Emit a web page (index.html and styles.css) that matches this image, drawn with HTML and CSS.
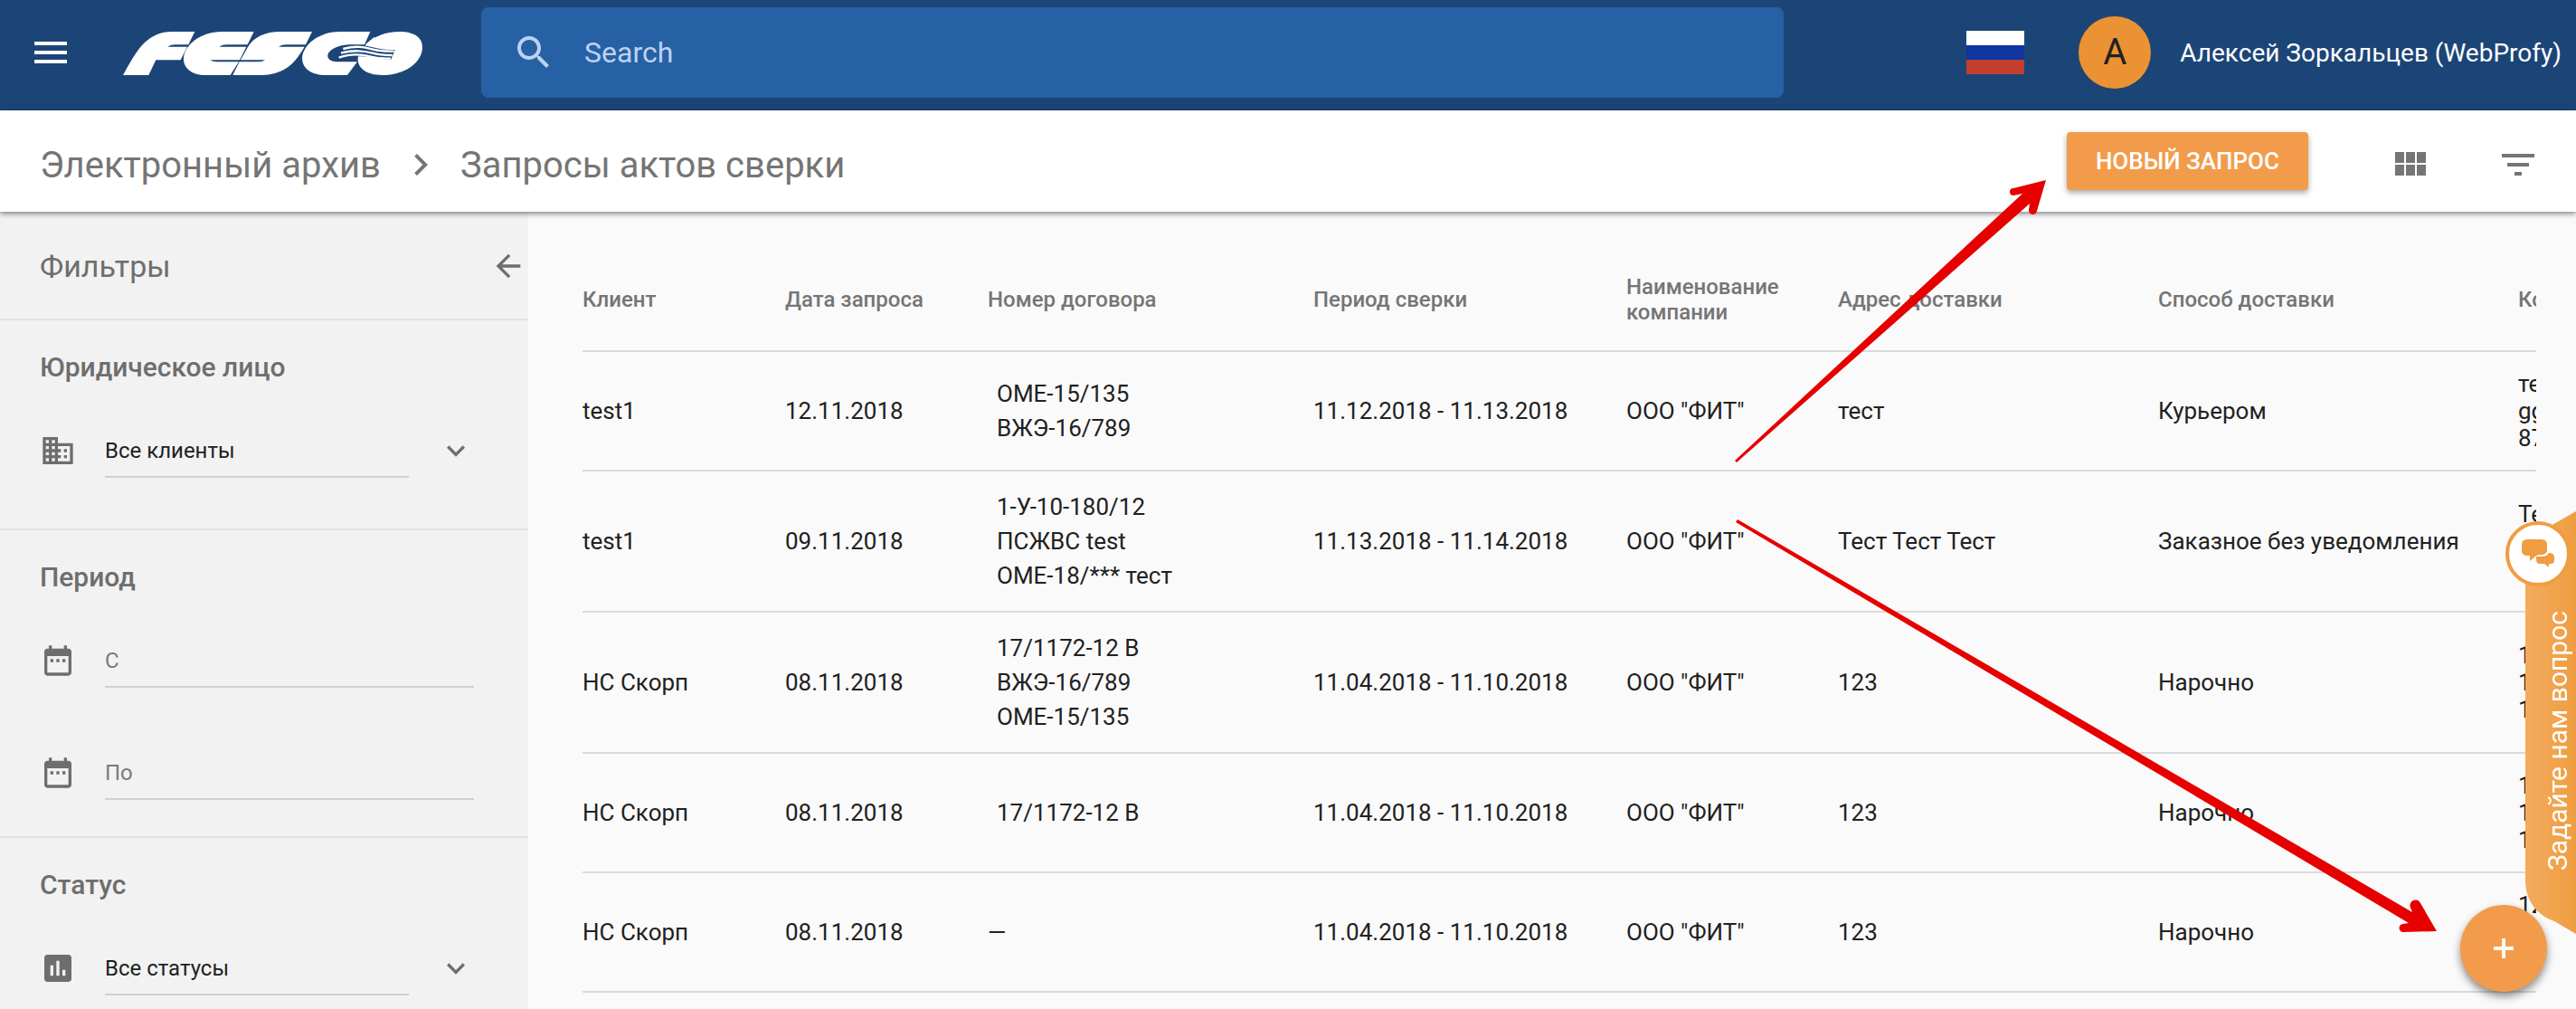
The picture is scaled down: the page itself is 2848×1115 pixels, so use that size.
FILE: index.html
```html
<!DOCTYPE html>
<html lang="ru">
<head>
<meta charset="utf-8">
<title>Запросы актов сверки</title>
<meta name="viewport" content="width=device-width, initial-scale=1">
<link rel="stylesheet" href="styles.css">
</head>
<body>
<header class="topbar">
  <button class="menu-button" type="button" aria-label="Меню">
    <svg class="icon-lg" viewBox="0 0 24 24"><path d="M3 18h18v-2H3v2zm0-5h18v-2H3v2zm0-7v2h18V6H3z"/></svg>
  </button>
  <a class="logo" href="#" aria-label="FESCO">
    <svg viewBox="0 0 1035 195" width="345" height="65">
      <g fill="#fff">
        <path d="M18 171C40 133 58 96 86 67C112 40 145 27 180 27H256L235 70H190Q176 70 166 77H231L209 121H127L103 171Z"/>
        <path d="M452 27L431 70H362Q347 70 337 77H427L405 121H307Q314 127 329 127H402L374 171H290C248 171 218 148 219 116C221 72 275 27 345 27Z"/>
        <path d="M645 27L624 70H560Q544 70 534 77H620C600 110 584 132 560 148C538 163 508 171 480 171H382L404 127H468Q482 127 489 121H408L432 78C452 44 490 27 540 27Z"/>
        <path d="M838 27L819 70H775C732 70 697 88 697 108C698 121 711 127 735 127H795L762 171H690C642 171 612 148 612 114C616 68 670 27 738 27Z"/>
        <path d="M824 71C850 42 890 27 935 27C980 27 1012 44 1011 80C1009 128 955 171 877 171C825 171 797 148 797 118C797 100 806 86 824 71Z"/>
      </g>
      <path fill="#1c4577" d="M750 76C790 66 825 73 860 82C880 87 900 87 920 87L907 119C870 120 840 108 803 109C778 110 755 113 731 122Z"/>
      <g fill="none" stroke="#fff" stroke-width="7">
        <path d="M748 84C790 73 815 77 848 86C872 93 893 92 917 92"/>
        <path d="M741 98C785 88 810 89 845 98C869 105 890 105 911 105"/>
        <path d="M734 113C778 99 806 102 840 110C865 117 885 116 906 116"/>
      </g>
      <path fill="#fff" d="M822 69L850 46L920 60L930 86C885 88 865 76 824 71Z"/>
    </svg>
  </a>
  <label class="search">
    <svg class="icon-lg" viewBox="0 0 24 24"><path d="M15.5 14h-.79l-.28-.27C15.41 12.59 16 11.11 16 9.5 16 5.91 13.09 3 9.5 3S3 5.91 3 9.5 5.91 16 9.5 16c1.61 0 3.09-.59 4.23-1.57l.27.28v.79l5 4.99L20.49 19l-4.99-5zm-6 0C7.01 14 5 11.99 5 9.5S7.01 5 9.5 5 14 7.01 14 9.5 11.99 14 9.5 14z"/></svg>
    <input type="search" placeholder="Search" aria-label="Search">
  </label>
  <div class="account">
    <button class="flag" type="button" aria-label="Русский"></button>
    <span class="avatar">А</span>
    <span class="user-name">Алексей Зоркальцев (WebProfy)</span>
  </div>
</header>

<div class="subheader">
  <nav class="crumbs">
    <a href="#">Электронный архив</a>
    <svg class="icon-lg" viewBox="0 0 24 24"><path d="M10 6L8.59 7.41 13.17 12l-4.58 4.59L10 18l6-6z"/></svg>
    <h1>Запросы актов сверки</h1>
  </nav>
  <div class="actions">
    <button class="new-request" type="button">НОВЫЙ ЗАПРОС</button>
    <button class="icon-button" type="button" aria-label="Вид"><svg class="icon-lg" viewBox="0 0 24 24"><path d="M4 11h5V5H4v6zm0 7h5v-6H4v6zm6 0h5v-6h-5v6zm6 0h5v-6h-5v6zm-6-7h5V5h-5v6zm6-6v6h5V5h-5z"/></svg></button>
    <button class="icon-button" type="button" aria-label="Фильтр"><svg class="icon-lg" viewBox="0 0 24 24"><path d="M10 18h4v-2h-4v2zM3 6v2h18V6H3zm3 7h12v-2H6v2z"/></svg></button>
  </div>
</div>

<div class="layout">
  <aside class="filters">
    <div class="filters-head">
      <h2>Фильтры</h2>
      <button type="button" aria-label="Скрыть фильтры"><svg class="icon" viewBox="0 0 24 24"><path d="M20 11H7.83l5.59-5.59L12 4l-8 8 8 8 1.41-1.41L7.83 13H20v-2z"/></svg></button>
    </div>
    <section class="filter-group filter-group-tall">
      <h3>Юридическое лицо</h3>
      <div class="field">
        <svg class="icon" viewBox="0 0 24 24"><path d="M12 7V3H2v18h20V7H12zM6 19H4v-2h2v2zm0-4H4v-2h2v2zm0-4H4V9h2v2zm0-4H4V5h2v2zm4 12H8v-2h2v2zm0-4H8v-2h2v2zm0-4H8V9h2v2zm0-4H8V5h2v2zm10 12h-8v-2h2v-2h-2v-2h2v-2h-2V9h8v10zm-2-8h-2v2h2v-2zm0 4h-2v2h2v-2z"/></svg>
        <select aria-label="Юридическое лицо"><option>Все клиенты</option></select>
        <svg class="icon" viewBox="0 0 24 24"><path d="M16.59 8.59L12 13.17 7.41 8.59 6 10l6 6 6-6z"/></svg>
      </div>
    </section>
    <section class="filter-group">
      <h3>Период</h3>
      <div class="field">
        <svg class="icon" viewBox="0 0 24 24"><path d="M9 11H7v2h2v-2zm4 0h-2v2h2v-2zm4 0h-2v2h2v-2zm2-7h-1V2h-2v2H8V2H6v2H5c-1.110 0-1.990.9-1.990 2L3 20c0 1.100.89 2 2 2h14c1.100 0 2-.9 2-2V6c0-1.100-.9-2-2-2zm0 16H5V9h14v11z"/></svg>
        <input type="text" placeholder="С" aria-label="Период с">
      </div>
      <div class="field">
        <svg class="icon" viewBox="0 0 24 24"><path d="M9 11H7v2h2v-2zm4 0h-2v2h2v-2zm4 0h-2v2h2v-2zm2-7h-1V2h-2v2H8V2H6v2H5c-1.110 0-1.990.9-1.990 2L3 20c0 1.100.89 2 2 2h14c1.100 0 2-.9 2-2V6c0-1.100-.9-2-2-2zm0 16H5V9h14v11z"/></svg>
        <input type="text" placeholder="По" aria-label="Период по">
      </div>
    </section>
    <section class="filter-group filter-group-last">
      <h3>Статус</h3>
      <div class="field">
        <svg class="icon" viewBox="0 0 24 24"><path d="M19 3H5c-1.100 0-2 .9-2 2v14c0 1.100.9 2 2 2h14c1.100 0 2-.9 2-2V5c0-1.100-.9-2-2-2zM9 17H7v-7h2v7zm4 0h-2V7h2v10zm4 0h-2v-4h2v4z"/></svg>
        <select aria-label="Статус"><option>Все статусы</option></select>
        <svg class="icon" viewBox="0 0 24 24"><path d="M16.59 8.59L12 13.17 7.41 8.59 6 10l6 6 6-6z"/></svg>
      </div>
    </section>
  </aside>

  <main class="content">
    <div class="table-wrap">
      <table class="requests">
        <colgroup><col class="w-client"><col class="w-date"><col class="w-contract"><col class="w-period"><col class="w-company"><col class="w-address"><col class="w-method"><col class="w-contact"></colgroup>
        <thead>
          <tr><th>Клиент</th><th>Дата запроса</th><th>Номер договора</th><th>Период сверки</th><th>Наименование компании</th><th>Адрес доставки</th><th>Способ доставки</th><th>Контакты</th></tr>
        </thead>
        <tbody>
          <tr><td>test1</td><td>12.11.2018</td><td><ul><li>ОМЕ-15/135</li><li>ВЖЭ-16/789</li></ul></td><td>11.12.2018 - 11.13.2018</td><td>ООО "ФИТ"</td><td>тест</td><td>Курьером</td><td>тест<br>ggg<br>877</td></tr>
          <tr><td>test1</td><td>09.11.2018</td><td><ul><li>1-У-10-180/12</li><li>ПСЖВС test</li><li>ОМЕ-18/*** тест</li></ul></td><td>11.13.2018 - 11.14.2018</td><td>ООО "ФИТ"</td><td>Тест Тест Тест</td><td>Заказное без уведомления</td><td>Тест<br>123<br>123</td></tr>
          <tr><td>НС Скорп</td><td>08.11.2018</td><td><ul><li>17/1172-12 В</li><li>ВЖЭ-16/789</li><li>ОМЕ-15/135</li></ul></td><td>11.04.2018 - 11.10.2018</td><td>ООО "ФИТ"</td><td>123</td><td>Нарочно</td><td>123<br>123<br>123</td></tr>
          <tr><td>НС Скорп</td><td>08.11.2018</td><td><ul><li>17/1172-12 В</li></ul></td><td>11.04.2018 - 11.10.2018</td><td>ООО "ФИТ"</td><td>123</td><td>Нарочно</td><td>123<br>123<br>123</td></tr>
          <tr><td>НС Скорп</td><td>08.11.2018</td><td>—</td><td>11.04.2018 - 11.10.2018</td><td>ООО "ФИТ"</td><td>123</td><td>Нарочно</td><td>123<br>123<br>123</td></tr>
        </tbody>
      </table>
    </div>
  </main>
</div>

<button class="ask" type="button">
  <span class="ask-body"><span class="ask-text">Задайте нам вопрос</span></span>
  <span class="ask-badge">
    <svg viewBox="0 0 36 32" width="36" height="32"><path d="M6 0H22Q28 0 28 6V12Q28 16 23 17H19Q15 18 14 20L9 24V18H6Q0 18 0 12V6Q0 0 6 0Z"/><path d="M30 15Q36 15 36 20V23Q36 27 32 27H30V31L25 27H20Q16 27 16 22V19H22Q28 19 30 15Z"/></svg>
  </span>
</button>

<button class="fab" type="button" aria-label="Добавить">
  <svg viewBox="0 0 24 24" width="24" height="24"><path d="M12 1v22M1 12h22"/></svg>
</button>

<svg class="pointers" viewBox="0 0 930 1115" width="930" height="1115" aria-hidden="true">
  <path d="M0 509L318 214L308 216A4 4 0 0 1 308 208L344 199L334 233A4 4 0 0 1 325 232L326 225L2 511Z"/>
  <path d="M3 574L749 1008L747 1003A4 4 0 0 1 758 998L776 1029L739 1030A4 4 0 0 1 739 1021L745 1020L1 577Z"/>
</svg>
</body>
</html>
```
FILE: styles.css
```css
* { box-sizing: border-box; }

body {
  margin: 0;
  min-height: 100vh;
  display: flex;
  flex-direction: column;
  background: #fafafa;
  color: #212121;
  font-family: Roboto, "Noto Sans", sans-serif;
  font-size: 26px;
  overflow-x: hidden;
}

button, input, select { font: inherit; color: inherit; border: 0; padding: 0; background: none; border-radius: 0; outline: 0; }
h1, h2, h3, ul { margin: 0; padding: 0; font-weight: 400; }
ul { list-style: none; }
svg { display: block; flex: none; fill: currentColor; }

.icon { width: 40px; height: 40px; }
.icon-lg { width: 48px; height: 48px; }

/* Top bar */
.topbar {
  display: flex;
  align-items: center;
  height: 122px;
  padding: 0 16px 6px 32px;
  background: #1c4577;
  color: #fff;
}
.logo { margin: 0 57px 0 50px; }
.search {
  flex: 0 1 1440px;
  display: flex;
  align-items: center;
  gap: 32px;
  height: 100px;
  padding: 0 34px;
  border-radius: 8px;
  background: #2661a6;
  color: #bdd2ee;
}
.search input { flex: 1; min-width: 0; height: 64px; font-size: 32px; appearance: none; }
.search input::placeholder { color: inherit; opacity: 1; }
.account { display: flex; align-items: center; margin-left: auto; white-space: nowrap; }
.flag { width: 64px; height: 48px; background: linear-gradient(#fff 33.3%, #0f359f 33.3% 66.6%, #c03f31 66.6%); }
.avatar {
  width: 80px;
  height: 80px;
  margin: 0 32px 0 60px;
  border-radius: 50%;
  background: #eb9234;
  color: #212121;
  font-size: 40px;
  line-height: 80px;
  text-align: center;
}
.user-name { font-size: 28px; }

/* Title bar */
.subheader {
  position: relative;
  z-index: 1;
  display: flex;
  justify-content: space-between;
  align-items: center;
  height: 112px;
  padding: 8px 16px 0 44px;
  background: #fff;
  color: #757575;
  box-shadow: 0 2px 6px rgba(0, 0, 0, .5);
}
.crumbs { display: flex; align-items: center; gap: 20px; font-size: 40px; }
.crumbs a { color: inherit; text-decoration: none; }
.crumbs h1 { font-size: 40px; }
.actions { display: flex; align-items: center; gap: 24px; }
.new-request {
  height: 64px;
  margin: 0 40px 8px 0;
  padding: 0 32px;
  border-radius: 4px;
  background: #f29c4b;
  color: #fff;
  font-weight: 500;
  box-shadow: 0 3px 6px rgba(0, 0, 0, .35);
}
.icon-button { display: flex; justify-content: center; width: 96px; }

.layout { flex: 1; display: flex; }

/* Filters */
.filters { flex: none; width: 584px; background: #f2f2f2; color: #6e6e6e; }
.filters-head {
  display: flex;
  justify-content: space-between;
  align-items: center;
  height: 120px;
  padding: 2px 2px 0 44px;
  border-bottom: 2px solid #e2e2e2;
}
.filters-head h2 { font-size: 34px; }
.filter-group { padding: 36px 60px 40px 44px; border-bottom: 2px solid #e2e2e2; }
.filter-group-tall { padding-bottom: 56px; }
.filter-group-last { padding-bottom: 0; border-bottom: 0; }
.filter-group h3 { margin-bottom: 46px; font-size: 30px; line-height: 32px; font-weight: 500; }
.field { display: flex; align-items: center; gap: 32px; height: 60px; }
.field + .field { margin-top: 64px; }
.field input, .field select {
  flex: 1;
  min-width: 0;
  height: 60px;
  padding-top: 2px;
  border-bottom: 2px solid #d0d0d0;
  font-size: 24px;
  appearance: none;
}
.field select { color: #212121; }
.field input::placeholder { color: #7b7b7b; opacity: 1; }

/* Requests table */
.content { flex: 1; min-width: 0; padding: 40px 44px 0 60px; }
.table-wrap { overflow: hidden; }
.requests { width: 2440px; table-layout: fixed; border-collapse: collapse; text-align: left; }
.w-client, .w-date { width: 224px; }
.w-contract { width: 360px; }
.w-period { width: 346px; }
.w-company { width: 234px; }
.w-address { width: 354px; }
.w-method { width: 398px; }
.requests th {
  height: 114px;
  padding: 0 40px 0 0;
  color: #757575;
  font-size: 24px;
  line-height: 28px;
  font-weight: 500;
}
.requests th, .requests td { border-bottom: 2px solid #dadada; vertical-align: middle; }
.requests td { padding: 20px 0; line-height: 30px; white-space: nowrap; }
.requests li { padding-left: 10px; line-height: 38px; }

/* Feedback tab */
.ask { position: fixed; z-index: 2; top: 565px; right: 0; width: 78px; height: 467px; color: #fff; cursor: pointer; }
.ask-body {
  display: flex;
  justify-content: center;
  align-items: flex-end;
  width: 56px;
  height: 100%;
  margin-left: auto;
  padding: 0 2px 70px 18px;
  background: linear-gradient(to right, #f3ac60, #ef9d40);
  clip-path: path("M56 0L28 16L0 34V407C0 430 12 446 32 453L56 467Z");
}
.ask-text { writing-mode: vertical-rl; transform: rotate(180deg); font-size: 30px; line-height: 36px; white-space: nowrap; }
.ask-badge {
  position: absolute;
  top: 11px;
  left: 0;
  display: flex;
  justify-content: center;
  align-items: center;
  width: 72px;
  height: 72px;
  border: 4px solid #ef9d42;
  border-radius: 50%;
  background: #fff;
  color: #ef9d42;
}

.fab {
  position: fixed;
  z-index: 3;
  right: 32px;
  bottom: 19px;
  display: flex;
  justify-content: center;
  align-items: center;
  width: 96px;
  height: 96px;
  border-radius: 50%;
  background: #f29c4b;
  box-shadow: 0 5px 10px rgba(0, 0, 0, .45);
}
.fab path { stroke: #fff; stroke-width: 4; }

.pointers { position: absolute; z-index: 4; top: 0; right: 0; fill: #e60000; pointer-events: none; }
```
